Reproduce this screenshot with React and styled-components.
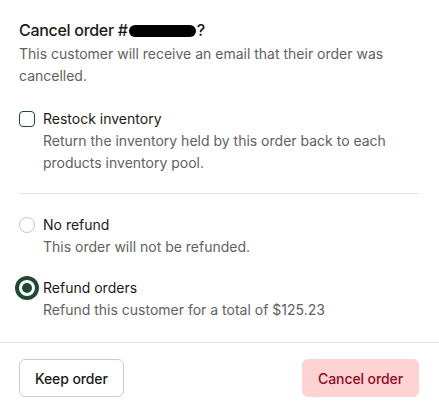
import React, { useState } from "react";
import styled, { createGlobalStyle } from "styled-components";

const Global = createGlobalStyle`
  html, body { margin: 0; padding: 0; background: #fff; }
  body { font-family: Inter, "Noto Sans", "Liberation Sans", sans-serif; -webkit-font-smoothing: antialiased; }
  * { box-sizing: border-box; }
`;

const Modal = styled.div`
  width: 439px;
  display: flex;
  flex-direction: column;
`;

const Body = styled.div`
  padding: 18px 20px 0 19px;
  display: flex;
  flex-direction: column;
`;

const Title = styled.h2`
  margin: 0;
  font-size: 16px;
  line-height: 25px;
  font-weight: 500;
  letter-spacing: -0.3px;
  color: #1a1a1a;
  display: flex;
  align-items: center;
`;

const Redacted = styled.span`
  display: inline-block;
  width: 67px;
  height: 12px;
  border-radius: 6px;
  background: #000;
  margin: 0 1px 0 1px;
`;

const Text = styled.p`
  margin: 0;
  font-size: 14px;
  line-height: 22px;
  color: #616161;
`;

const Section = styled.div`
  display: flex;
  flex-direction: column;
  gap: ${(p) => p.$gap || 0}px;
  padding: ${(p) => p.$pad || "0"};
`;

const Divider = styled.hr`
  margin: 0;
  border: 0;
  border-top: 1px solid #e3e3e3;
`;

const Option = styled.label`
  display: grid;
  grid-template-columns: 16px 1fr;
  column-gap: 8px;
  align-items: center;
  cursor: pointer;
`;

const Label = styled.span`
  font-size: 14px;
  line-height: 22px;
  color: #1a1a1a;
`;

const Help = styled(Text)`
  grid-column: 2;
`;

const Checkbox = styled.span`
  width: 16px;
  height: 16px;
  border-radius: 4px;
  border: 1.5px solid #1f4a31;
  background: #fff;
`;

const Radio = styled.span`
  width: 16px;
  height: 16px;
  border-radius: 50%;
  ${(p) =>
    p.$checked
      ? `background: #1f4a31; box-shadow: inset 0 0 0 3px #fff, 0 0 0 4px #1f4a31;`
      : `border: 1px solid #c7c7c7; background: #fff;`}
`;

const Footer = styled.div`
  margin-top: 21px;
  border-top: 1px solid #e3e3e3;
  padding: 16px 20px 16px 19px;
  display: flex;
  justify-content: space-between;
  align-items: center;
`;

const Button = styled.button`
  height: 38px;
  padding: 0 15px;
  border-radius: 6px;
  font-family: inherit;
  font-size: 14px;
  font-weight: 500;
  letter-spacing: -0.1px;
  cursor: pointer;
  ${(p) =>
    p.$variant === "danger"
      ? `background: #fed3d1; color: #8e0b21; border: 1px solid #fed3d1;`
      : `background: #fff; color: #1a1a1a; border: 1px solid #cccccc;`}
`;

export default function App() {
  const [refund, setRefund] = useState("refund");
  return (
    <>
      <Global />
      <Modal>
        <Body>
          <Title>
            Cancel order #<Redacted />?
          </Title>
          <Text>This customer will receive an email that their order was cancelled.</Text>

          <Section $pad="21px 0 19px">
            <Option>
              <Checkbox />
              <Label>Restock inventory</Label>
              <Help>Return the inventory held by this order back to each products inventory pool.</Help>
            </Option>
          </Section>

          <Divider />

          <Section $pad="20px 0 0" $gap={19}>
            <Option onClick={() => setRefund("none")}>
              <Radio $checked={refund === "none"} />
              <Label>No refund</Label>
              <Help>This order will not be refunded.</Help>
            </Option>
            <Option onClick={() => setRefund("refund")}>
              <Radio $checked={refund === "refund"} />
              <Label>Refund orders</Label>
              <Help>Refund this customer for a total of $125.23</Help>
            </Option>
          </Section>
        </Body>
        <Footer>
          <Button>Keep order</Button>
          <Button $variant="danger">Cancel order</Button>
        </Footer>
      </Modal>
    </>
  );
}
